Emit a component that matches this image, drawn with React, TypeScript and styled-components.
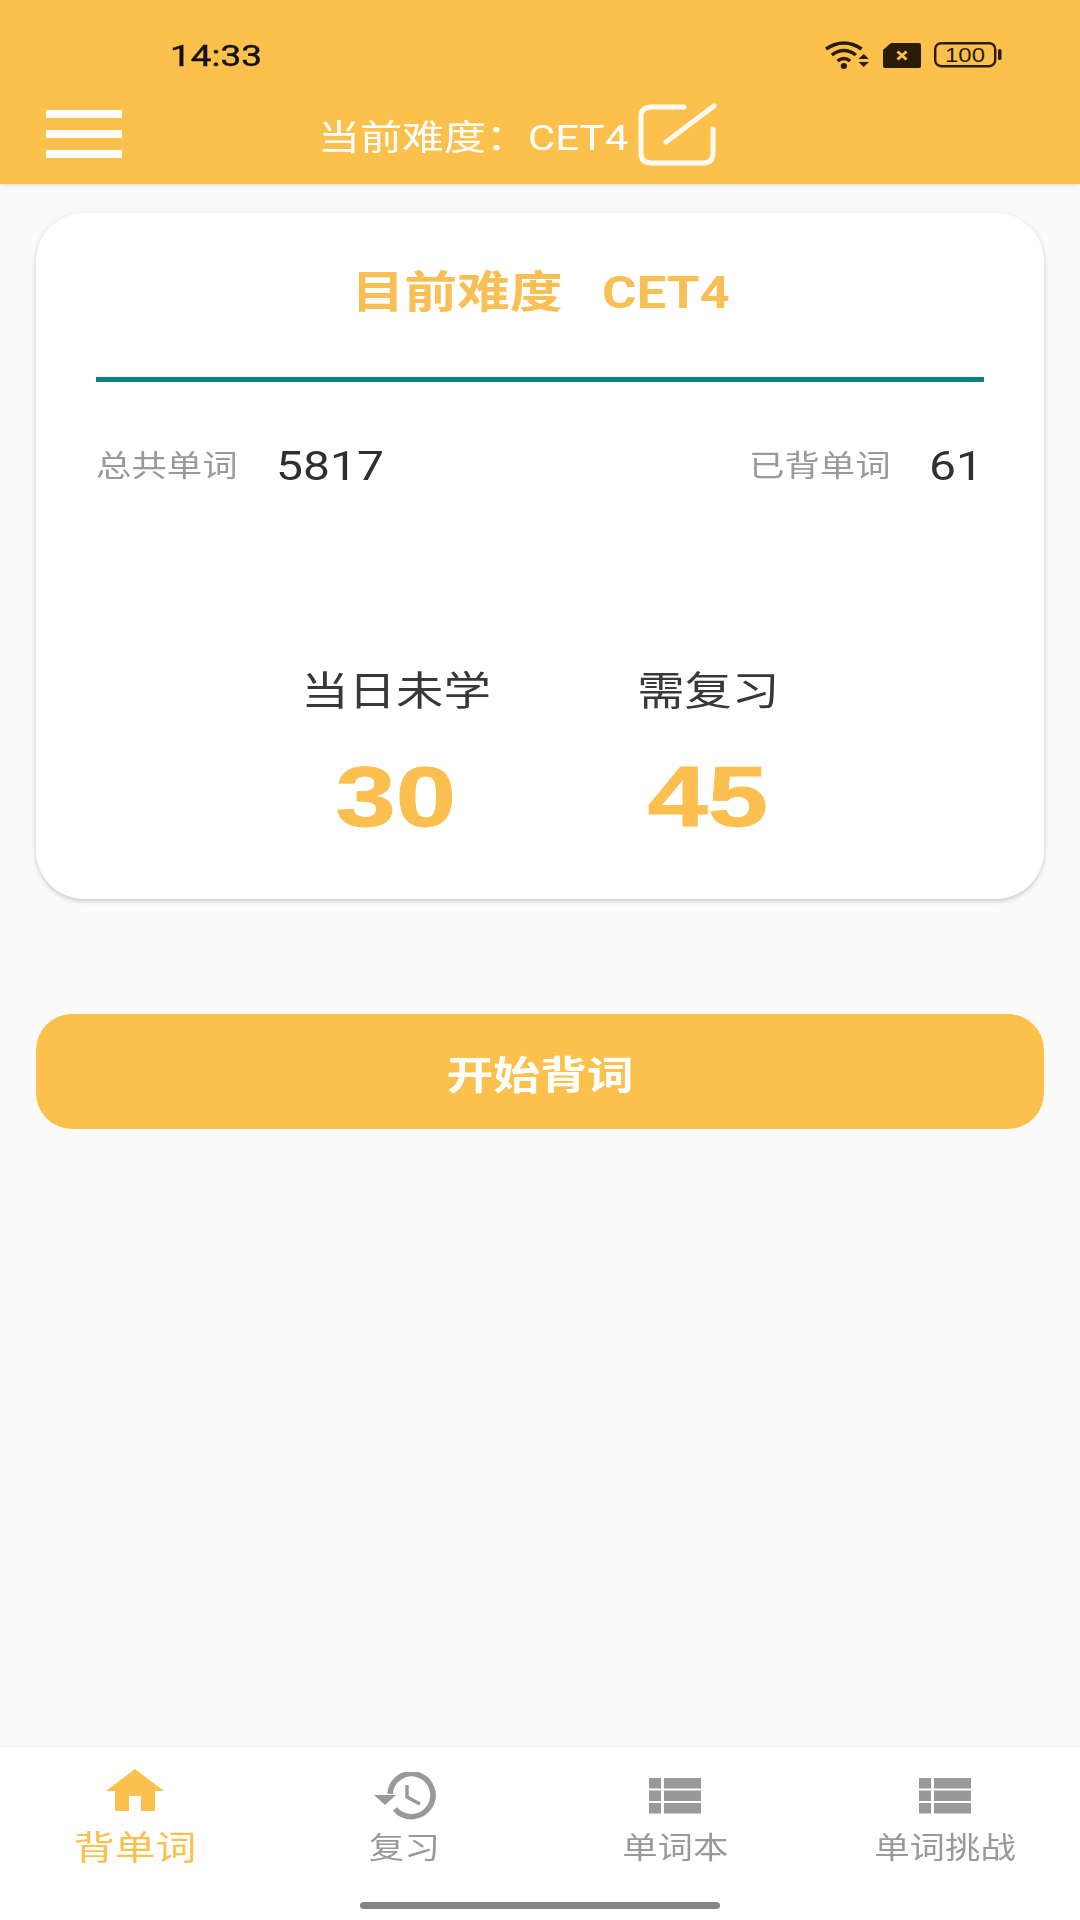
import React from "react";
import styled, { createGlobalStyle, css } from "styled-components";

const AMBER = "#fcc04d";
const GREY = "#999999";
const FONT = `Roboto, "Noto Sans CJK SC", sans-serif`;

// The app's type is drawn wide, so text runs get the same horizontal stretch
const wideFromLeft = css`
  display: inline-block;
  transform: scaleX(1.2);
  transform-origin: left center;
`;

const wideFromCentre = css`
  display: inline-block;
  transform: scaleX(1.2);
  transform-origin: center;
`;

const GlobalStyle = createGlobalStyle`
  html, body {
    margin: 0;
    padding: 0;
    background: #fafafa;
  }
  * {
    box-sizing: border-box;
  }
`;

const Page = styled.div`
  width: 1080px;
  height: 1920px;
  display: flex;
  flex-direction: column;
  background: #fafafa;
  font-family: ${FONT};
  overflow: hidden;
`;

const Header = styled.header`
  height: 184px;
  flex: none;
  background: ${AMBER};
  box-shadow: 0 1px 4px rgba(0, 0, 0, 0.12);
  display: flex;
  flex-direction: column;
`;

const StatusBar = styled.div`
  height: 100px;
  padding: 32px 78px 0 170px;
  display: flex;
  align-items: flex-start;
  justify-content: space-between;
`;

const Clock = styled.span`
  display: inline-block;
  transform: scaleX(1.23);
  transform-origin: left center;
  font-size: 30px;
  line-height: 48px;
  color: #111111;
  -webkit-text-stroke: 0.4px #111111;
`;

const StatusIcons = styled.div`
  display: flex;
  align-items: center;
  gap: 13px;
  height: 46px;
`;

const Toolbar = styled.div`
  flex: 1;
  padding-left: 46px;
  display: flex;
  align-items: center;
`;

const MenuButton = styled.div`
  width: 76px;
  height: 48px;
  flex: none;
  display: flex;
  flex-direction: column;
  justify-content: space-between;
  margin-top: -16px;
  margin-right: 196px;
`;

const MenuBar = styled.div`
  height: 8px;
  background: #ffffff;
`;

const ToolbarTitle = styled.span`
  ${wideFromLeft};
  font-size: 35px;
  line-height: 50px;
  color: #ffffff;
  white-space: pre;
  margin-top: -6px;
  margin-right: 60px;
`;

const EditIcon = styled.svg`
  width: 80px;
  height: 66px;
  margin-top: -12px;
  flex: none;
  filter: blur(0.7px);
`;

const Main = styled.main`
  flex: 1;
  padding: 29px 36px 0;
  display: flex;
  flex-direction: column;
`;

const Card = styled.section`
  height: 686px;
  background: #ffffff;
  border-radius: 48px;
  box-shadow: 0 2px 5px rgba(0, 0, 0, 0.2);
  padding: 0 60px;
  display: flex;
  flex-direction: column;
`;

const CardHeading = styled.div`
  height: 169px;
  padding: 0 0 12px 2px;
  border-bottom: 5px solid #0f7f7c;
  display: flex;
  align-items: center;
  justify-content: center;
`;

const CardTitle = styled.h2`
  ${wideFromCentre};
  margin: 0;
  white-space: pre;
  font-size: 44px;
  font-weight: 700;
  color: #f8bf55;
`;

const TotalsRow = styled.div`
  margin-top: 59px;
  height: 50px;
  display: flex;
  align-items: center;
  justify-content: space-between;
`;

const Total = styled.div`
  display: flex;
  align-items: center;
  gap: 62px;

  &:last-child {
    margin-right: 10px;
  }
`;

const TotalLabel = styled.span`
  ${wideFromLeft};
  font-size: 29.5px;
  line-height: 44px;
  color: ${GREY};
`;

const TotalValue = styled.span`
  ${wideFromLeft};
  font-size: 40px;
  line-height: 50px;
  padding-top: 2px;
  color: #2f2f2f;
`;

const Stats = styled.div`
  margin-top: 173px;
  padding-left: 24px;
  display: grid;
  grid-template-columns: repeat(2, 312px);
  justify-content: center;
`;

const Stat = styled.div`
  display: flex;
  flex-direction: column;
  align-items: center;
`;

const StatLabel = styled.span`
  ${wideFromCentre};
  font-size: 39.5px;
  line-height: 56px;
  color: #383838;
`;

const StatValue = styled.span`
  display: inline-block;
  transform: scaleX(1.26);
  transform-origin: center;
  margin-top: 26px;
  font-family: "Liberation Sans", sans-serif;
  font-size: 86px;
  line-height: 100px;
  font-weight: 700;
  color: #fbbf4f;
  -webkit-text-stroke: 0.8px #fbbf4f;
`;

const StartButton = styled.button`
  margin-top: 115px;
  height: 115px;
  flex: none;
  border: none;
  border-radius: 36px;
  background: ${AMBER};
  color: #ffffff;
  font-family: ${FONT};
  font-size: 39px;
  font-weight: 700;
`;

const StartLabel = styled.span`
  ${wideFromCentre};
`;

const TabBar = styled.nav`
  height: 173px;
  flex: none;
  background: #ffffff;
  box-shadow: 0 -1px 2px rgba(0, 0, 0, 0.05);
  display: grid;
  grid-template-columns: repeat(4, 270px);
  position: relative;
`;

const Tab = styled.div<{ $active?: boolean }>`
  display: flex;
  flex-direction: column;
  align-items: center;
  padding-top: 20px;
  color: ${({ $active }) => ($active ? AMBER : GREY)};
`;

const TabIconSlot = styled.div<{ $top: number }>`
  height: 52px;
  padding-top: ${({ $top }) => $top}px;
  display: flex;
  align-items: flex-start;
  justify-content: center;
`;

const TabLabel = styled.span<{ $active?: boolean }>`
  ${wideFromCentre};
  margin-top: 6px;
  font-size: ${({ $active }) => ($active ? "34px" : "29.5px")};
  line-height: 46px;
`;

const HomeIndicator = styled.div`
  position: absolute;
  left: 360px;
  bottom: 11px;
  width: 360px;
  height: 7px;
  border-radius: 4px;
  background: #848484;
`;

const WifiIcon = () => (
  <svg width="46" height="30" viewBox="0 0 44 30" preserveAspectRatio="none">
    <g fill="none" stroke="#2a1c06" strokeWidth="3.4">
      <path d="M2 9 Q19 -3 36 9" />
      <path d="M7.5 15 Q19 6 30.5 15" />
      <path d="M13 21 Q19 16 25 21" />
    </g>
    <circle cx="19" cy="26" r="3" fill="#2a1c06" />
    <path d="M33 19 L38 14 L43 19 Z M33 22 L43 22 L38 27 Z" fill="#2a1c06" />
  </svg>
);

const SimIcon = () => (
  <svg width="38" height="25" viewBox="0 0 38 25">
    <path d="M8 0 H36 Q38 0 38 2 V23 Q38 25 36 25 H2 Q0 25 0 23 V7 Z" fill="#2a1c06" />
    <path d="M14.5 8.5 L23.5 16.5 M23.5 8.5 L14.5 16.5" stroke="#fcc04d" strokeWidth="3" />
  </svg>
);

const BatteryIcon = () => (
  <svg width="68" height="26" viewBox="0 0 68 26">
    <rect x="1.2" y="1.2" width="60" height="23" rx="6" fill="none" stroke="#2a1c06" strokeWidth="2.4" />
    <rect x="64" y="7" width="3.5" height="11" rx="1.5" fill="#2a1c06" />
    <text
      x="31"
      y="20"
      textAnchor="middle"
      textLength="40"
      lengthAdjust="spacingAndGlyphs"
      fontFamily="Liberation Sans, sans-serif"
      fontSize="20"
      fill="#2a1c06"
    >
      100
    </text>
  </svg>
);

const HomeIcon = () => (
  <svg width="58" height="42" viewBox="0 0 58 42">
    <path d="M29 0 L58 22 H49 V42 H35 V27 H23 V42 H9 V22 H0 Z" fill={AMBER} />
  </svg>
);

const HistoryIcon = () => (
  <svg width="64" height="48" viewBox="0 0 64 48">
    <path d="M17 22 A21.5 21.5 0 1 1 22 37" fill="none" stroke={GREY} strokeWidth="5.5" />
    <path d="M1 23 H23 L12 33 Z" fill={GREY} />
    <path d="M34 13 V25 L47 32" fill="none" stroke={GREY} strokeWidth="3.5" />
  </svg>
);

const ListIcon = () => (
  <svg width="52" height="36" viewBox="0 0 52 36" fill={GREY}>
    <rect x="0" y="0" width="12" height="10.5" />
    <rect x="15" y="0" width="37" height="10.5" />
    <rect x="0" y="12.5" width="12" height="10.5" />
    <rect x="15" y="12.5" width="37" height="10.5" />
    <rect x="0" y="25" width="12" height="10.5" />
    <rect x="15" y="25" width="37" height="10.5" />
  </svg>
);

const tabs = [
  { label: "背单词", icon: <HomeIcon />, top: 2, active: true },
  { label: "复习", icon: <HistoryIcon />, top: 5 },
  { label: "单词本", icon: <ListIcon />, top: 11 },
  { label: "单词挑战", icon: <ListIcon />, top: 11 },
];

export default function App() {
  return (
    <Page>
      <GlobalStyle />
      <Header>
        <StatusBar>
          <Clock>14:33</Clock>
          <StatusIcons>
            <WifiIcon />
            <SimIcon />
            <BatteryIcon />
          </StatusIcons>
        </StatusBar>
        <Toolbar>
          <MenuButton>
            <MenuBar />
            <MenuBar />
            <MenuBar />
          </MenuButton>
          <ToolbarTitle>当前难度：CET4</ToolbarTitle>
          <EditIcon viewBox="0 0 80 66">
            <g fill="none" stroke="#ffffff" strokeWidth="5" strokeLinecap="round" opacity="0.92">
              <path d="M47 4 H14 Q4 4 4 14 V50 Q4 60 14 60 H66 Q76 60 76 50 V26" />
              <path d="M29 39 L77 3" />
            </g>
          </EditIcon>
        </Toolbar>
      </Header>
      <Main>
        <Card>
          <CardHeading>
            <CardTitle>目前难度   CET4</CardTitle>
          </CardHeading>
          <TotalsRow>
            <Total>
              <TotalLabel>总共单词</TotalLabel>
              <TotalValue>5817</TotalValue>
            </Total>
            <Total>
              <TotalLabel>已背单词</TotalLabel>
              <TotalValue>61</TotalValue>
            </Total>
          </TotalsRow>
          <Stats>
            <Stat>
              <StatLabel>当日未学</StatLabel>
              <StatValue>30</StatValue>
            </Stat>
            <Stat>
              <StatLabel>需复习</StatLabel>
              <StatValue>45</StatValue>
            </Stat>
          </Stats>
        </Card>
        <StartButton>
          <StartLabel>开始背词</StartLabel>
        </StartButton>
      </Main>
      <TabBar>
        {tabs.map((tab) => (
          <Tab key={tab.label} $active={tab.active}>
            <TabIconSlot $top={tab.top}>{tab.icon}</TabIconSlot>
            <TabLabel $active={tab.active}>{tab.label}</TabLabel>
          </Tab>
        ))}
        <HomeIndicator />
      </TabBar>
    </Page>
  );
}
